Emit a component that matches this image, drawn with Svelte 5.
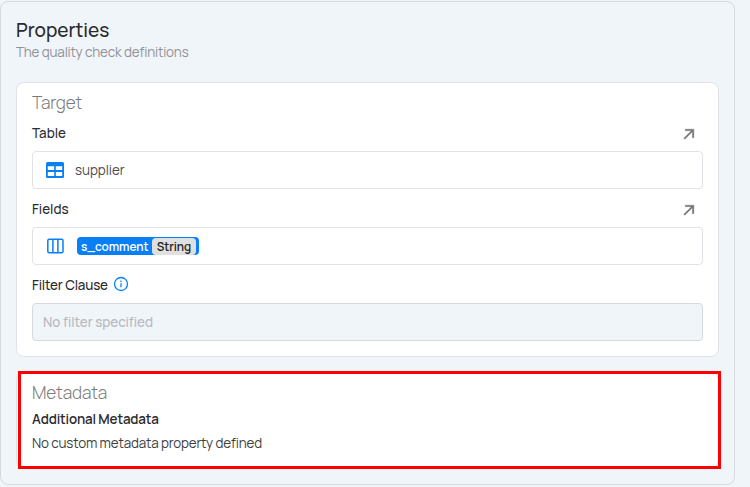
<script>
  const arrow = 'M5 17.6 6.4 19 16.5 8.9V17h2V5.5H7v2h8.1z';
</script>

<main class="panel">
  <header>
    <h1>Properties</h1>
    <p>The quality check definitions</p>
  </header>

  <section class="card target">
    <h2>Target</h2>
    <div class="label">
      <span class="short">Table</span>
      <svg class="arrow" viewBox="0 0 24 24"><path d={arrow} /></svg>
    </div>
    <div class="field">
      <svg class="table-icon" viewBox="0 0 18 16">
        <path fill-rule="evenodd" d="M1.5 0h15A1.5 1.5 0 0 1 18 1.5v13a1.5 1.5 0 0 1-1.5 1.5h-15A1.5 1.5 0 0 1 0 14.5v-13A1.5 1.5 0 0 1 1.5 0zm.3 4.2v3.9h6.4V4.2zm8 0v3.9h6.4V4.2zM1.8 9.9v4.2h6.4V9.9zm8 0v4.2h6.4V9.9z" />
      </svg>
      <span>supplier</span>
    </div>
    <div class="label">
      <span class="short">Fields</span>
      <svg class="arrow" viewBox="0 0 24 24"><path d={arrow} /></svg>
    </div>
    <div class="field">
      <svg class="columns-icon" viewBox="0 0 17 16">
        <rect x="0.8" y="1.3" width="15.2" height="13.5" rx="1.5" />
        <path d="M5.9 1.3v13.5M10.9 1.3v13.5" />
      </svg>
      <div class="chip"><span class="name">s_comment</span><span class="type">String</span></div>
    </div>
    <div class="label filter">
      <span>Filter Clause</span>
      <svg class="info" viewBox="0 0 16 16">
        <circle cx="8" cy="8" r="6.5" />
        <path d="M8 7.2v4.1M8 4.5v1.5" />
      </svg>
    </div>
    <div class="field disabled">No filter specified</div>
  </section>

  <section class="card metadata">
    <h2>Metadata</h2>
    <h3>Additional Metadata</h3>
    <p>No custom metadata property defined</p>
    <div class="highlight"></div>
  </section>
</main>

<style>
  :global(body) {
    background: #f0f5fa;
    font-family: Manrope, Inter, "Open Sans", sans-serif;
  }
  .panel {
    box-sizing: border-box;
    width: 735px;
    height: 484px;
    margin-top: 1px;
    padding: 16px 15px;
    border: 1px solid #d6dae0;
    border-radius: 8px;
    background: #f0f5fa;
    color: #2b2b2e;
    white-space: nowrap;
    font-size: 13.4px;
    letter-spacing: -0.16px;
  }
  h1, h2, h3, p { margin: 0; }
  header { height: 64px; }
  h1 {
    height: 24px;
    font-size: 19px;
    line-height: 25px;
    font-weight: 550;
    letter-spacing: -0.03px;
  }
  header p {
    line-height: 20px;
    font-weight: 400;
    color: #8f9296;
  }
  .card {
    position: relative;
    box-sizing: border-box;
    width: 703px;
    padding: 0 15px;
    border: 1px solid #dfe2e6;
    border-radius: 8px;
    background: #fff;
  }
  .target { height: 275px; }
  h2 {
    height: 30px;
    font-size: 17.2px;
    line-height: 40px;
    font-weight: 300;
    letter-spacing: -0.12px;
    color: #7b7b7b;
  }
  .label {
    display: flex;
    align-items: center;
    justify-content: space-between;
    box-sizing: border-box;
    height: 38px;
    padding: 2px 5px 0 0;
    font-weight: 550;
  }
  .short { letter-spacing: 0; }
  .label span { margin-top: -1px; }
  .field {
    display: flex;
    align-items: center;
    box-sizing: border-box;
    height: 38px;
    border: 1px solid #dfe2e6;
    border-radius: 4px;
    letter-spacing: -0.03px;
    color: #4b4b4d;
  }
  .arrow {
    width: 18px;
    height: 18px;
    margin-top: 1px;
    fill: #757575;
    stroke: #757575;
    stroke-width: 0.5;
  }
  .table-icon {
    width: 18px;
    height: 16px;
    margin: 0 11px 1px 13px;
    fill: #087ff5;
  }
  .columns-icon {
    width: 17px;
    height: 16px;
    margin-left: 14px;
    margin-right: 13px;
    fill: none;
    stroke: #087ff5;
    stroke-width: 1.5;
  }
  .chip {
    display: flex;
    align-items: center;
    box-sizing: border-box;
    width: 122px;
    height: 18px;
    padding-left: 4px;
    border-radius: 4px;
    background: #087ff5;
    color: #fff;
    font-size: 11.8px;
    font-weight: 600;
    letter-spacing: -0.03px;
  }
  .name { width: 71px; }
  .type {
    width: 44px;
    height: 17px;
    border-radius: 4px;
    background: #e0e0e0;
    color: #222;
    line-height: 17px;
    text-align: center;
  }
  .filter { justify-content: flex-start; gap: 5px; }
  .info {
    width: 16px;
    height: 16px;
    margin-top: -3px;
    fill: none;
    stroke: #087ff5;
    stroke-width: 1.3;
  }
  .disabled {
    padding: 0 0 1px 10px;
    border-color: #d6dae0;
    background: #f0f5fa;
    color: #b6babf;
    font-weight: 550;
  }
  .metadata {
    height: 96px;
    margin-top: 15px;
  }
  .metadata h2 { height: 37px; }
  .highlight {
    position: absolute;
    top: -2px;
    left: 1px;
    box-sizing: border-box;
    width: 703px;
    height: 98px;
    border: 3px solid #f00;
  }
  h3 {
    font-size: inherit;
    line-height: 18px;
    font-weight: 600;
  }
  .metadata p {
    margin-top: 5px;
    line-height: 20px;
    color: #3e3e40;
  }
</style>
